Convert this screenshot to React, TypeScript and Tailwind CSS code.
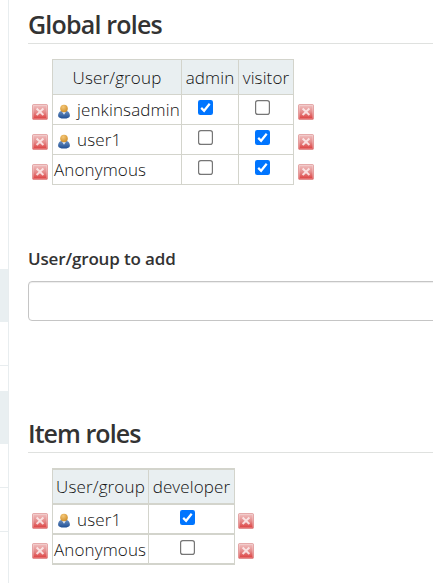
import { useState } from 'react';

function DeleteIcon() {
  return (
    <svg viewBox="0 0 16 16" className="block h-4 w-4">
      <defs>
        <linearGradient id="del" x1="0" y1="0" x2="0" y2="1">
          <stop offset="0" stopColor="#f0c4c4" />
          <stop offset="0.5" stopColor="#e58c8c" />
          <stop offset="1" stopColor="#dc3838" />
        </linearGradient>
      </defs>
      <rect x="0.5" y="0.5" width="15" height="15" rx="1" fill="url(#del)" stroke="#dc8c8c" strokeOpacity="0.65" />
      <rect x="1.5" y="1.5" width="13" height="13" fill="none" stroke="#ffffff" strokeOpacity="0.22" />
      <path d="M4.6 4.6l6.8 6.4M11.4 4.6L4.6 11" stroke="#fdf0f0" strokeOpacity="0.85" strokeWidth="2" />
    </svg>
  );
}

function UserIcon() {
  return (
    <svg viewBox="0 0 16 16" className="block h-4 w-4 shrink-0">
      <defs>
        <linearGradient id="body" x1="0" y1="0" x2="0" y2="1">
          <stop offset="0" stopColor="#6c91c1" />
          <stop offset="1" stopColor="#1e4e94" />
        </linearGradient>
        <radialGradient id="head" cx="0.4" cy="0.3" r="0.7">
          <stop offset="0" stopColor="#f5c878" />
          <stop offset="1" stopColor="#cf8f2c" />
        </radialGradient>
      </defs>
      <path d="M2.1 11.8C2.1 8.4 4.4 6.6 8 6.6s5.9 1.8 5.9 5.2c0 1.9-2.2 2.8-5.9 2.8s-5.9-.9-5.9-2.8z" fill="url(#body)" />
      <path d="M6.2 8h3.6L8 10.8z" fill="#dfe7f1" />
      <circle cx="8" cy="4.5" r="3.8" fill="url(#head)" />
    </svg>
  );
}

function Check({ initial }: { initial: boolean }) {
  const [on, setOn] = useState(initial);
  return (
    <button role="checkbox" aria-checked={on} onClick={() => setOn(!on)} className="block h-[15px] w-[15px]">
      <svg viewBox="0 0 15 15" className="block h-[15px] w-[15px]">
        {on ? (
          <>
            <rect width="15" height="15" rx="2.2" fill="#0075ff" />
            <path d="M3.2 7.9l2.9 2.9 5.6-7.1" fill="none" stroke="#fff" strokeWidth="2.2" />
          </>
        ) : (
          <rect x="0.6" y="0.6" width="13.8" height="13.8" rx="2.2" fill="#fff" stroke="#767676" strokeWidth="1.2" />
        )}
      </svg>
    </button>
  );
}

function GlobalRow({ name, user, checks }: { name: string; user?: boolean; checks: boolean[] }) {
  return (
    <div className="flex h-[30px]">
      <div className="w-5 pt-[9px]"><DeleteIcon /></div>
      <div className="flex w-[129px] border-b border-l border-[#d3d4cc] pl-px">
        {user && <div className="mr-[5px] pt-[9px] pl-[2px]"><UserIcon /></div>}
        <span className="leading-[29px]">{name}</span>
      </div>
      <div className="w-[57px] border-b border-l border-[#d3d4cc] pt-[5px] pl-4"><Check initial={checks[0]} /></div>
      <div className="w-14 border-x border-b border-[#d3d4cc] pt-[5px] pl-4"><Check initial={checks[1]} /></div>
      <div className="pt-[9px] pl-1"><DeleteIcon /></div>
    </div>
  );
}

function ItemRow({ name, user, checked }: { name: string; user?: boolean; checked: boolean }) {
  return (
    <div className="flex h-[30px]">
      <div className="w-5 pt-2"><DeleteIcon /></div>
      <div className="flex w-24 border-b-2 border-l border-[#d3d4cc] pl-px">
        {user && <div className="mr-[5px] pt-2 pl-[2px]"><UserIcon /></div>}
        <span className="leading-[29px]">{name}</span>
      </div>
      <div className="w-[87px] border-x border-b-2 border-[#d3d4cc] pt-[5px] pl-[31px]"><Check initial={checked} /></div>
      <div className="pt-2 pl-[3px]"><DeleteIcon /></div>
    </div>
  );
}

export default function App() {
  return (
    <div className="flex h-[583px] w-[433px] overflow-hidden bg-white font-['Open_Sans','Noto_Sans',sans-serif] text-[17px] font-light tracking-[0.13px] whitespace-nowrap text-[#111]">
      <aside className="w-[9px] shrink-0 border-r border-[#e8edef]">
        <div className="h-[269px]" />
        <div className="h-[53px] bg-[#e9eff1]" />
        <div className="h-11 border-b border-[#e8edef]" />
        <div className="h-[25px]" />
        <div className="h-[53px] bg-[#e9eff1]" />
        <div className="h-11 border-b border-[#e8edef]" />
        <div className="h-11 border-b border-[#e8edef]" />
      </aside>
      <main className="min-w-0 flex-1 pl-[19px]">
        <h2 className="h-11 border-b border-[#dfe1df] pt-[7px] text-[25px] leading-[35px] font-semibold tracking-[-0.8px] text-[#333]">Global roles</h2>
        <section className="mt-[15px] ml-1">
          <div className="ml-5 flex h-9 w-[242px] border border-[#d3d4cc] bg-[#e9eff1] text-center leading-[36px]">
            <div className="w-32">User/group</div>
            <div className="w-[57px] border-l border-[#d3d4cc]">admin</div>
            <div className="flex-1 border-l border-[#d3d4cc]">visitor</div>
          </div>
          <GlobalRow name="jenkinsadmin" user checks={[true, false]} />
          <GlobalRow name="user1" user checks={[false, true]} />
          <GlobalRow name="Anonymous" checks={[false, true]} />
        </section>
        <label className="mt-[61px] block h-[35px] text-[17px] leading-[26px] font-semibold tracking-[-0.15px] text-[#333]">User/group to add</label>
        <input aria-label="User/group to add" className="block h-10 w-[500px] rounded-[4px] border border-[#c5c5c5] shadow-[inset_0_1px_1px_rgba(0,0,0,0.075)] outline-none" />
        <h2 className="mt-[88px] h-11 border-b border-[#dfe1df] pt-[7px] text-[25px] leading-[35px] font-semibold tracking-[-0.95px] text-[#333]">Item roles</h2>
        <section className="mt-[15px] ml-1">
          <div className="ml-5 flex h-[37px] w-[183px] border-x border-y-2 border-[#d3d4cc] bg-[#e9eff1] text-center leading-[34px]">
            <div className="w-[95px]">User/group</div>
            <div className="flex-1 border-l border-[#d3d4cc]">developer</div>
          </div>
          <ItemRow name="user1" user checked />
          <ItemRow name="Anonymous" checked={false} />
        </section>
      </main>
    </div>
  );
}
